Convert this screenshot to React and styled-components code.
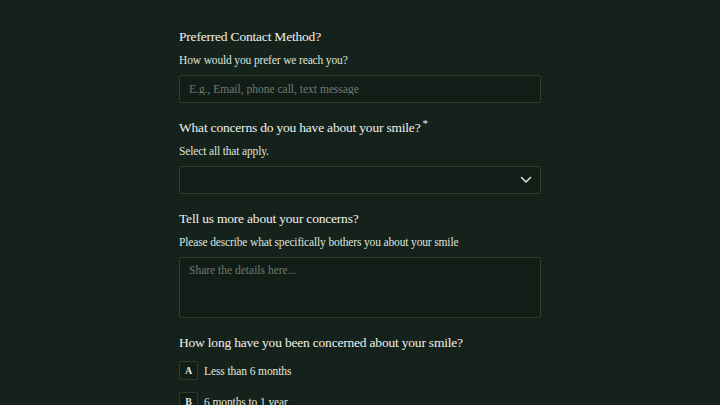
import React from 'react'
import styled, { createGlobalStyle } from 'styled-components'

const GlobalStyle = createGlobalStyle`
  html, body {
    margin: 0;
    padding: 0;
    background: #15221c;
    font-family: "Liberation Serif", "Times New Roman", serif;
    color: #e9ece6;
  }
`

const durations = [
  { key: 'A', label: 'Less than 6 months' },
  { key: 'B', label: '6 months to 1 year' },
]

export default function App() {
  return (
    <Page>
      <GlobalStyle />
      <Form>
        <Field>
          <Heading>Preferred Contact Method?</Heading>
          <Hint>How would you prefer we reach you?</Hint>
          <TextInput placeholder="E.g., Email, phone call, text message" />
        </Field>
        <Field>
          <Heading>
            What concerns do you have about your smile?<Star>*</Star>
          </Heading>
          <Hint>Select all that apply.</Hint>
          <Select>
            <svg width="12" height="8" viewBox="0 0 12 8" fill="none">
              <path d="M1.5 1.5 L6 6 L10.5 1.5" stroke="#d9ddd6" strokeWidth="1.6" strokeLinecap="round" strokeLinejoin="round" />
            </svg>
          </Select>
        </Field>
        <Field>
          <Heading>Tell us more about your concerns?</Heading>
          <Hint>Please describe what specifically bothers you about your smile</Hint>
          <TextArea placeholder="Share the details here..." />
        </Field>
        <Field>
          <Heading>How long have you been concerned about your smile?</Heading>
          <Options>
            {durations.map((d) => (
              <Option key={d.key}>
                <KeyBox>{d.key}</KeyBox>
                <span>{d.label}</span>
              </Option>
            ))}
          </Options>
        </Field>
      </Form>
    </Page>
  )
}

const Page = styled.div`
  height: 405px;
  overflow: hidden;
  display: flex;
  justify-content: center;
  padding-top: 28px;
  box-sizing: border-box;
`

const Form = styled.div`
  width: 362px;
  display: flex;
  flex-direction: column;
  gap: 16px;
`

const Field = styled.div`
  display: flex;
  flex-direction: column;
`

const Heading = styled.div`
  font-size: 13.5px;
  letter-spacing: -0.2px;
  line-height: 18px;
  color: #eef0ea;
`

const Star = styled.sup`
  font-size: 11px;
  margin-left: 2px;
  line-height: 0;
`

const Hint = styled.div`
  font-size: 11.5px;
  letter-spacing: -0.15px;
  line-height: 16px;
  color: #dfe3dc;
  margin: 6px 0 7px;
`

const TextInput = styled.input`
  box-sizing: border-box;
  height: 28px;
  width: 100%;
  background: #121d17;
  border: 1px solid #2c3d2d;
  border-radius: 2px;
  padding: 0 9px;
  font-family: inherit;
  font-size: 11.5px;
  color: #e9ece6;
  outline: none;
  &::placeholder {
    color: #6f7a70;
  }
`

const Select = styled.div`
  box-sizing: border-box;
  height: 28px;
  border: 1px solid #2c3d2d;
  border-radius: 2px;
  background: #121d17;
  display: flex;
  align-items: center;
  justify-content: flex-end;
  padding-right: 8px;
`

const TextArea = styled.textarea`
  box-sizing: border-box;
  height: 61px;
  width: 100%;
  resize: none;
  background: #121d17;
  border: 1px solid #2c3d2d;
  border-radius: 2px;
  padding: 6px 9px;
  font-family: inherit;
  font-size: 11.5px;
  color: #e9ece6;
  outline: none;
  &::placeholder {
    color: #6f7a70;
  }
`

const Options = styled.div`
  display: flex;
  flex-direction: column;
  gap: 12px;
  margin-top: 9px;
`

const Option = styled.div`
  display: flex;
  align-items: center;
  gap: 6px;
  font-size: 11.5px;
  letter-spacing: -0.1px;
  color: #e2e6df;
`

const KeyBox = styled.div`
  box-sizing: border-box;
  width: 19px;
  height: 19px;
  border: 1px solid #2c3d2d;
  border-radius: 2px;
  background: #121d17;
  display: flex;
  align-items: center;
  justify-content: center;
  font-size: 10px;
  font-weight: bold;
`
